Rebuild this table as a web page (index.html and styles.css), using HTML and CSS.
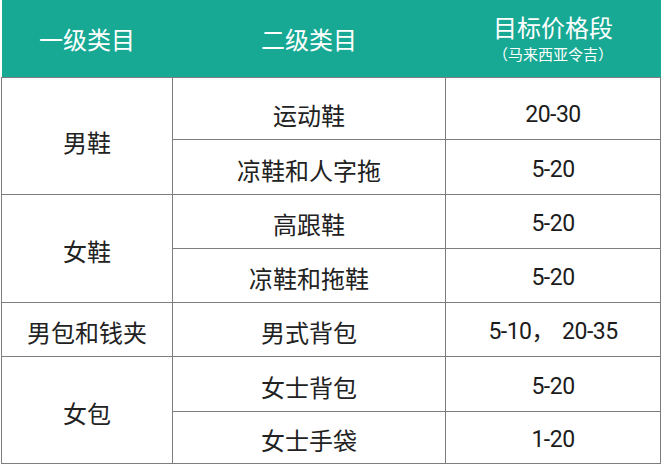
FILE: index.html
```html
<!DOCTYPE html>
<html lang="zh">
<head>
<meta charset="utf-8">
<link rel="stylesheet" href="styles.css">
</head>
<body>
<table class="price-table">
  <colgroup>
    <col class="c1">
    <col class="c2">
    <col class="c3">
  </colgroup>
  <thead>
    <tr class="head">
      <th>一级类目</th>
      <th>二级类目</th>
      <th class="th-price"><div class="main">目标价格段</div><div class="sub">（马来西亚令吉）</div></th>
    </tr>
  </thead>
  <tbody>
    <tr class="r1"><td rowspan="2" class="cat first">男鞋</td><td class="first">运动鞋</td><td class="num first">20-30</td></tr>
    <tr class="r2"><td>凉鞋和人字拖</td><td class="num">5-20</td></tr>
    <tr class="r3"><td rowspan="2" class="cat">女鞋</td><td>高跟鞋</td><td class="num">5-20</td></tr>
    <tr class="r4"><td>凉鞋和拖鞋</td><td class="num">5-20</td></tr>
    <tr class="r5"><td class="cat">男包和钱夹</td><td>男式背包</td><td class="num">5-10<span class="comma">，</span>20-35</td></tr>
    <tr class="r6"><td rowspan="2" class="cat">女包</td><td>女士背包</td><td class="num">5-20</td></tr>
    <tr class="r7"><td>女士手袋</td><td class="num">1-20</td></tr>
  </tbody>
</table>
</body>
</html>
```
FILE: styles.css
```css
html, body {
  margin: 0;
  padding: 0;
  background: #ffffff;
}
body {
  font-family: "Noto Sans CJK SC", "Noto Sans", sans-serif;
  color: #222222;
}
.price-table {
  margin-left: 1px;
  width: 659px;
  border-collapse: collapse;
  table-layout: fixed;
}
.c1 { width: 171px; }
.c2 { width: 273px; }
.c3 { width: 215px; }
.head {
  background: #17a994;
  height: 77px;
}
.head th {
  color: #ffffff;
  font-weight: 400;
  font-size: 24px;
  padding: 0;
  border: none;
  text-align: center;
  vertical-align: middle;
}
.th-price .main {
  font-size: 24px;
  line-height: 30px;
  margin-top: 0;
}
.th-price .sub {
  font-size: 15px;
  line-height: 20px;
  margin-top: 2px;
}
td {
  border: 1px solid #7d7d7d;
  text-align: center;
  vertical-align: middle;
  font-size: 24px;
  padding: 6px 0 0;
  line-height: 30px;
}
td.first {
  padding-top: 14px;
}
td.cat.first {
  padding-top: 13px;
}
.num {
  font-family: "Roboto", "Noto Sans CJK SC", sans-serif;
  font-size: 23px;
  letter-spacing: -0.5px;
  color: #1c1c1c;
}
.comma {
  margin-right: 8px;
}
.r1 { height: 62px; }
.r2 { height: 55px; }
.r3 { height: 54px; }
.r4 { height: 54px; }
.r5 { height: 54px; }
.r6 { height: 55px; }
.r7 { height: 52px; }
```
